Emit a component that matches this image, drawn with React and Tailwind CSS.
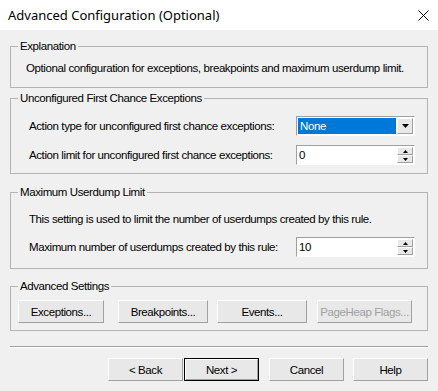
const ui = "font-['Liberation_Sans',Arial,sans-serif] text-[11.5px] tracking-[-0.4px] leading-[14px] text-black";

function Btn({ children, className = "", disabled, isDefault }) {
  return (
    <div
      className={`h-[23px] flex items-center justify-center ${
        isDefault ? "border border-black" : "border border-[#a0a0a0] border-t-white border-l-white"
      } ${className}`}
    >
      <div
        className={`w-full h-full flex items-center justify-center bg-[#e8e8e8] ${
          isDefault ? "border border-[#a0a0a0] border-t-white border-l-white" : ""
        } ${disabled ? "text-[#a0a0a0]" : ""}`}
      >
        {children}
      </div>
    </div>
  );
}

function Group({ title, className = "", children }) {
  return (
    <fieldset className={`border border-[#b4b4b4] pl-[7px] pr-[12px] ${className}`}>
      <legend className="px-[2px] leading-[14px]">{title}</legend>
      {children}
    </fieldset>
  );
}

function Combo({ value }) {
  return (
    <div className="w-[119px] h-[20px] flex border border-[#a0a0a0] border-r-white border-b-white bg-white">
      <div className="flex-1 m-[1px] mr-0 bg-[#0078d7] text-white pl-[2px] flex items-center">{value}</div>
      <div className="w-[16px] m-[1px] bg-[#e8e8e8] border border-[#a0a0a0] border-t-white border-l-white flex items-center justify-center">
        <svg width="7" height="4" viewBox="0 0 7 4">
          <path d="M0 0h7L3.5 4z" fill="#000" />
        </svg>
      </div>
    </div>
  );
}

function Spin({ value }) {
  return (
    <div className="w-[119px] h-[20px] flex border border-[#a0a0a0] border-r-white border-b-white bg-white">
      <div className="flex-1 pl-[2px] flex items-center">{value}</div>
      <div className="w-[16px] m-[1px] flex flex-col">
        <div className="flex-1 bg-[#e8e8e8] border border-[#a0a0a0] border-t-white border-l-white flex items-center justify-center">
          <svg width="5" height="3" viewBox="0 0 5 3">
            <path d="M2.5 0L5 3H0z" fill="#000" />
          </svg>
        </div>
        <div className="flex-1 bg-[#e8e8e8] border border-[#a0a0a0] border-t-white border-l-white flex items-center justify-center">
          <svg width="5" height="3" viewBox="0 0 5 3">
            <path d="M0 0h5L2.5 3z" fill="#000" />
          </svg>
        </div>
      </div>
    </div>
  );
}

export default function App() {
  return (
    <div className={`w-[438px] h-[391px] bg-[#f0f0f0] overflow-hidden ${ui}`}>
      {/* title bar */}
      <div className="h-[30px] bg-white flex items-center justify-between pl-[8px] pr-[8px]">
        <span className="font-['Noto_Sans',sans-serif] text-[13px] tracking-normal">
          Advanced Configuration (Optional)
        </span>
        <svg width="11" height="11" viewBox="0 0 11 11" className="mr-[1px]">
          <path d="M0.5 0.5l10 10M10.5 0.5l-10 10" stroke="#000" strokeWidth="1" />
        </svg>
      </div>

      <div className="px-[10px]">
        <Group title="Explanation" className="mt-[9px] pb-[12px]">
          <div className="mt-[8px] pl-[8px]">
            Optional configuration for exceptions, breakpoints and maximum userdump limit.
          </div>
        </Group>

        <Group title="Unconfigured First Chance Exceptions" className="mt-[3px] pb-[8px]">
          <div className="mt-[11px] pl-[11px] flex items-center">
            <span className="w-[267px]">Action type for unconfigured first chance exceptions:</span>
            <Combo value="None" />
          </div>
          <div className="mt-[9px] pl-[11px] flex items-center">
            <span className="w-[267px]">Action limit for unconfigured first chance exceptions:</span>
            <Spin value="0" />
          </div>
        </Group>

        <Group title="Maximum Userdump Limit" className="mt-[11px] pb-[11px]">
          <div className="mt-[13px] pl-[11px]">
            This setting is used to limit the number of userdumps created by this rule.
          </div>
          <div className="mt-[11px] pl-[11px] flex items-center">
            <span className="w-[267px]">Maximum number of userdumps created by this rule:</span>
            <Spin value="10" />
          </div>
        </Group>

        <Group title="Advanced Settings" className="mt-[10px] pb-[7px]">
          <div className="mt-[7px] flex">
            <Btn className="w-[86px]">Exceptions...</Btn>
            <Btn className="w-[90px] ml-[14px]">Breakpoints...</Btn>
            <Btn className="w-[90px] ml-[9px]">Events...</Btn>
            <Btn className="w-[95px] ml-[10px]" disabled>
              PageHeap Flags...
            </Btn>
          </div>
        </Group>

        <div className="mt-[15px] border-t border-[#a0a0a0] border-b border-b-white" />

        <div className="mt-[10px] flex justify-end">
          <Btn className="w-[75px]">&lt; Back</Btn>
          <Btn className="w-[75px] ml-[1px]" isDefault>
            Next &gt;
          </Btn>
          <Btn className="w-[75px] ml-[10px]">Cancel</Btn>
          <Btn className="w-[75px] ml-[9px]">Help</Btn>
        </div>
      </div>
    </div>
  );
}
